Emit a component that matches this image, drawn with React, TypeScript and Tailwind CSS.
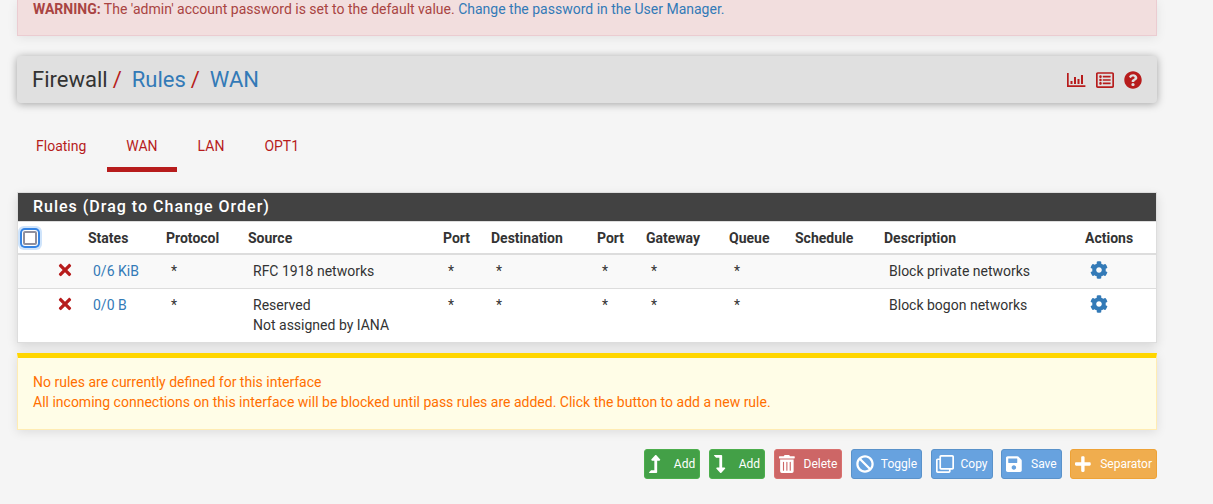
import type { ReactNode } from 'react';
import type { IconType } from 'react-icons';
import {
  FaBan,
  FaCog,
  FaLevelDownAlt,
  FaLevelUpAlt,
  FaPlus,
  FaQuestionCircle,
  FaRegClone,
  FaRegListAlt,
  FaSave,
  FaTimes,
  FaTrashAlt,
} from 'react-icons/fa';

function ChartIcon() {
  return (
    <svg viewBox="0 0 20 16" className="h-4 w-5" fill="currentColor" aria-hidden="true">
      <path d="M1 1h1.7v12.3H19.4V15H1zM4.5 9h2v3h-2zM8 5h2v7H8zM11.5 7h2v5h-2zM15 3h2v9h-2z" />
    </svg>
  );
}

const tabs = ['Floating', 'WAN', 'LAN', 'OPT1'];

const columns = [
  { label: '', width: 'w-[35px]' },
  { label: 'States', width: 'w-[78px]' },
  { label: 'Protocol', width: 'w-[82px]' },
  { label: 'Source', width: 'w-[195px]' },
  { label: 'Port', width: 'w-[48px]' },
  { label: 'Destination', width: 'w-[106px]' },
  { label: 'Port', width: 'w-[49px]' },
  { label: 'Gateway', width: 'w-[83px]' },
  { label: 'Queue', width: 'w-[66px]' },
  { label: 'Schedule', width: 'w-[89px]' },
  { label: 'Description', width: 'w-[201px]' },
  { label: 'Actions', width: 'w-[76px]' },
];

const rules = [
  { states: '0/6 KiB', source: ['RFC 1918 networks'], description: 'Block private networks' },
  { states: '0/0 B', source: ['Reserved', 'Not assigned by IANA'], description: 'Block bogon networks' },
];

function Cell({ children, padding = 'px-[10px]' }: { children?: ReactNode; padding?: string }) {
  return <td className={`pt-[6px] pb-[7px] align-top whitespace-nowrap ${padding}`}>{children}</td>;
}

type ActionProps = {
  icon: IconType;
  label: string;
  tone: string;
};

function Action({ icon: Icon, label, tone }: ActionProps) {
  return (
    <button
      type="button"
      className={`ml-[5px] inline-flex h-[30px] items-center gap-[7px] rounded-[3px] border px-1 align-top text-[12px] leading-[18px] text-white ${tone}`}
    >
      <Icon className="size-[18px] shrink-0" preserveAspectRatio="xMinYMid meet" />
      {label}
    </button>
  );
}

const green = 'border-[#4cae4c] bg-[#43a047]';
const blue = 'border-[#5a92ca] bg-[#67a2df]';

export default function App() {
  return (
    <div className="min-h-screen bg-[#f5f5f5] pr-14 pb-6 pl-[17px] font-['Roboto',sans-serif] text-[14px] leading-5 text-[#333]">
      <div
        role="alert"
        className="border border-t-0 border-[#ebccd1] bg-[#f2dede] px-[15px] pb-[17px] leading-[18px] text-[#a94442] shadow-[0_2px_10px_rgba(0,0,0,0.08)]"
      >
        <strong className="font-bold">WARNING:</strong> The 'admin' account password is set to the default value.{' '}
        <a href="#users" className="text-[#337ab7]">
          Change the password in the User Manager.
        </a>
      </div>

      <header className="mt-5 flex h-[47px] items-center justify-between rounded-[4px] bg-[#e0e0e0] px-[15px] shadow-[0_1px_8px_rgba(0,0,0,0.35)]">
        <nav aria-label="Breadcrumb">
          <ol className="flex text-[22px] leading-6">
            <li>Firewall</li>
            <li>
              <span className="pr-[10px] pl-[5px] text-[#b71c1c]">/</span>
              <a href="#rules" className="text-[#337ab7]">Rules</a>
            </li>
            <li>
              <span className="pr-[10px] pl-[5px] text-[#b71c1c]">/</span>
              <a href="#wan" className="text-[#337ab7]">WAN</a>
            </li>
          </ol>
        </nav>
        <div className="flex items-center gap-[10px] text-[#b71c1c]">
          <a href="#status" aria-label="Status"><ChartIcon /></a>
          <a href="#log" aria-label="Log entries"><FaRegListAlt className="size-[18px]" /></a>
          <a href="#help" aria-label="Help"><FaQuestionCircle className="size-[18px]" /></a>
        </div>
      </header>

      <nav className="mt-[21px] flex gap-[2px]" aria-label="Interfaces">
        {tabs.map((tab) => (
          <a
            key={tab}
            href={`#${tab}`}
            className={`border-b-[5px] px-[19px] pt-3 pb-[11px] text-[#b71c1c] ${
              tab === 'WAN' ? 'border-[#b71c1c]' : 'border-transparent'
            }`}
          >
            {tab}
          </a>
        ))}
      </nav>

      <section className="mt-5 border border-[#ddd] bg-white shadow-[0_4px_10px_rgba(0,0,0,0.12)]">
        <h2 className="border-b border-[#ddd] bg-[#424242] px-[15px] pt-px pb-0.5 text-[16px] leading-[25px] font-medium tracking-[1px] text-white">
          Rules (Drag to Change Order)
        </h2>
        <table className="w-full table-fixed border-collapse">
          <thead>
            <tr className="h-8 border-b-2 border-[#ddd]">
              <th className="w-[30px] p-0 pl-[5px] text-left">
                <input
                  type="checkbox"
                  aria-label="Select all rules"
                  className="block size-[14px] appearance-none rounded-[2px] border-2 border-[#8f8f9d] bg-white shadow-[0_0_0_1px_#fff,0_0_0_3px_#3584e4,0_0_0_5px_#cfe4fb]"
                />
              </th>
              {columns.map((column, index) => (
                <th key={index} className={`p-0 pl-[5px] text-left font-bold ${column.width}`}>
                  {column.label}
                </th>
              ))}
            </tr>
          </thead>
          <tbody>
            {rules.map((rule) => (
              <tr key={rule.states} className="border-b border-[#ddd] last:border-b-0 odd:bg-[#f9f9f9]">
                <Cell />
                <Cell padding="px-2">
                  <FaTimes className="size-[18px] text-[#b71c1c]" aria-label="Block" />
                </Cell>
                <Cell><a href="#states" className="text-[#337ab7]">{rule.states}</a></Cell>
                <Cell>*</Cell>
                <Cell>
                  {rule.source.map((line) => (
                    <div key={line}>{line}</div>
                  ))}
                </Cell>
                <Cell>*</Cell>
                <Cell>*</Cell>
                <Cell>*</Cell>
                <Cell>*</Cell>
                <Cell>*</Cell>
                <Cell />
                <Cell>{rule.description}</Cell>
                <Cell>
                  <a href="#settings" aria-label="Settings" className="text-[#337ab7]">
                    <FaCog className="size-[18px]" />
                  </a>
                </Cell>
              </tr>
            ))}
          </tbody>
        </table>
      </section>

      <div className="mt-[10px] border border-t-[5px] border-[#ffecb3] border-t-[#ffd600] bg-[#fffde7] px-[15px] pt-[14px] pb-[17px] text-[#ff6f00] shadow-[0_2px_10px_rgba(0,0,0,0.1)]">
        <p>No rules are currently defined for this interface</p>
        <p>All incoming connections on this interface will be blocked until pass rules are added. Click the button to add a new rule.</p>
      </div>

      <div className="mt-[19px] text-right">
        <Action icon={FaLevelUpAlt} label="Add" tone={green} />{' '}
        <Action icon={FaLevelDownAlt} label="Add" tone={green} />{' '}
        <Action icon={FaTrashAlt} label="Delete" tone="border-[#d9706e] bg-[#cd6666]" />{' '}
        <Action icon={FaBan} label="Toggle" tone={blue} />{' '}
        <Action icon={FaRegClone} label="Copy" tone={blue} />{' '}
        <Action icon={FaSave} label="Save" tone={blue} />{' '}
        <Action icon={FaPlus} label="Separator" tone="border-[#eea236] bg-[#f0ad4e]" />
      </div>
    </div>
  );
}
